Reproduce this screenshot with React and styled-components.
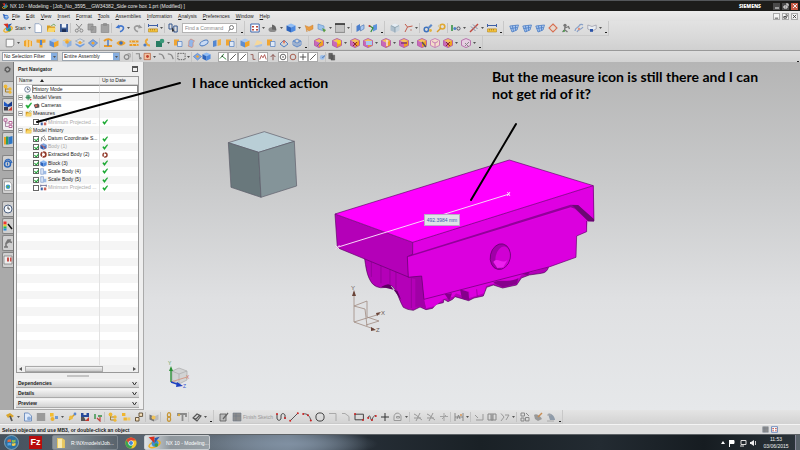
import styled, { createGlobalStyle } from 'styled-components'

const GlobalStyle = createGlobalStyle`
  * {
    box-sizing: border-box;
  }

  body {
    margin: 0;
    font-family: 'Liberation Sans', Arial, sans-serif;
    font-size: 5px;
    color: #1c1c1c;
  }

  button,
  input,
  select {
    font: inherit;
    color: inherit;
    margin: 0;
    padding: 0;
    border: 0;
    background: none;
  }
`

/* ---------- icons ---------- */

const cube = (top, left, right) => (
  <>
    <polygon points="5,.5 9.5,2.5 5,4.6 .5,2.5" fill={top} />
    <polygon points=".5,2.5 5,4.6 5,9.6 .5,7.4" fill={left} />
    <polygon points="9.5,2.5 5,4.6 5,9.6 9.5,7.4" fill={right} />
  </>
)

const magentaCube = (extra) => (
  <>
    {cube('#f7c25a', '#c968b8', '#f0a020')}
    <path d="M5 .5 9.5 2.5V7.4L5 9.6.5 7.4V2.5z" fill="none" stroke="#b65aa8" strokeWidth=".9" />
    {extra}
  </>
)

const line = (d, stroke = '#555', width = 1) => (
  <path d={d} fill="none" stroke={stroke} strokeWidth={width} />
)

const dot = (cx, cy, fill = '#c22', r = 1) => <circle cx={cx} cy={cy} r={r} fill={fill} />

const glyphs = {
  nx: (
    <>
      <ellipse cx="5" cy="6.4" rx="4.5" ry="2" transform="rotate(-25 5 6.4)" fill="none" stroke="#f0b020" strokeWidth="1.2" />
      {dot(5.4, 5.6, '#3a8fd0', 2.6)}
      {dot(6.4, 7, '#3a9a48', 1.4)}
      <path d="M.5 1 5 .4 5 5.5z" fill="#d83020" />
      <path d="M5 1.6 9 .6 5.4 5z" fill="#2a58a8" />
    </>
  ),
  app: (
    <>
      {dot(6, 6, '#4a86d8', 3.5)}
      <path d="M1 1 5 3 3 7z" fill="#2d5fb8" />
      <path d="M4 5h4M5 7h3" stroke="#d4e4f8" />
    </>
  ),
  page: <path d="M2 .7h4.2L8.5 3v6.5H2z" fill="#fdfdff" stroke="#7b93b8" strokeWidth=".7" />,
  sheet: <path d="M1.2 1.2h7.6V7L7 8.8H1.2z" fill="#f8f8f8" stroke="#777" strokeWidth=".8" />,
  folder: (
    <>
      <path d="M1 2.5h3l1 1h4V9H1z" fill="#d59b22" />
      <path d="m1 9 1.8-4.2h7L8 9z" fill="#f9d76a" />
      <path d="m5 3 3-2 1.5 2" stroke="#6b9f52" fill="none" strokeWidth=".8" />
    </>
  ),
  disk: (
    <>
      <path d="M1 1h8v8H1z" fill="#3b5b94" />
      <path d="M2.8 1h4.4v3.6H2.8z" fill="#eef3fa" />
      <path d="M3 6.2h4V9H3z" fill="#1d2f55" />
    </>
  ),
  cut: (
    <>
      {line('M2 1 6.5 6M8 1 3.8 6', '#888')}
      <circle cx="2.8" cy="7.6" r="1.5" fill="none" stroke="#888" />
      <circle cx="7.4" cy="7.6" r="1.5" fill="none" stroke="#888" />
    </>
  ),
  copy: <path d="M1 1h5v6H1zM4 3.5h5v6H4z" fill="#a2a2a2" stroke="#888" strokeWidth=".7" />,
  paste: <path d="M1.2 1.5h7.6v8H1.2zM3.5.5h3v2h-3z" fill="#a2a2a2" stroke="#888" strokeWidth=".7" />,
  undo: (
    <>
      {line('M3 4.2C6 1.5 9.5 3.5 8.2 6.2 7.6 7.6 6 8.4 5 8.8', '#3f74cc', 1.6)}
      <path d="M.5 4.8 4 1.4l.8 4.2z" fill="#3f74cc" />
    </>
  ),
  redo: (
    <>
      {line('M7 4.2C4 1.5.5 3.5 1.8 6.2 2.4 7.6 4 8.4 5 8.8', '#999', 1.6)}
      <path d="M9.5 4.8 6 1.4l-.8 4.2z" fill="#999" />
    </>
  ),
  ruler: (
    <>
      {line('M.5 2.5h9M.5 1v3M9.5 1v3', '#3d5fa6')}
      <path d="M.5 5.8h9V9h-9z" fill="#f6c33d" stroke="#a67a14" strokeWidth=".5" />
      {line('M2.5 6v1.5M4.5 6v1.5M6.5 6v1.5', '#805c0e', 0.5)}
    </>
  ),
  pick: (
    <>
      {line('M1 1h3v5H1zM5.8 3h3.4v6H5.8z', '#35578f')}
      <path d="M4 4v5l1.5-1.2L7 9z" fill="#333" />
    </>
  ),
  windowFit: (
    <>
      <path d="M.8 1h8.4v8H.8z" fill="#fff" stroke="#3f67ac" />
      <path d="M2 3h2v1.5H2zM6 3h2v1.5H6zM2 6h2v1.5H2zM6 6h2v1.5H6z" fill="#b9483c" />
    </>
  ),
  shade: (
    <>
      <ellipse cx="4.5" cy="6.5" rx="4" ry="2.6" fill="#8c8c8c" />
      <path d="M4 6.5V1.5C7 2 8.5 4 8 7z" fill="#666" />
    </>
  ),
  blueCube: cube('#8fbcf5', '#2c63bb', '#4d8ae0'),
  paleCube: (
    <>
      {cube('#e5edf4', '#aebfcc', '#c7d4de')}
      {line('M1 2.5 5 4.5 9 2.5M5 4.5v5', '#78909f', 0.7)}
    </>
  ),
  goldCube: cube('#a8c8f2', '#5f8dd0', '#f2a52a'),
  flag: <path d="M1 2.5 5 4l4-2v4L5 8 3 6.5V9L2 5z" fill="#e99c42" stroke="#c5782a" strokeWidth=".4" />,
  cursorPlane: (
    <>
      <path d="M1 1 7 3v5L1 6z" fill="#9cc3ec" stroke="#5f8fc4" strokeWidth=".6" />
      <path d="m5 5 4 2-2 2.5z" fill="#5b9b3f" />
    </>
  ),
  swatch: (
    <>
      <path d="M.2 1h9.6v8.4H.2z" fill="#c4c4c4" stroke="#777" strokeWidth=".8" />
      {line('M0 1h10', '#111', 1.2)}
    </>
  ),
  plane: (
    <>
      <path d="M1.5 3 5 1v6L1.5 9z" fill="#4c7fcc" />
      <path d="M5.5 3.5 9 1.8v4L5.5 8z" fill="#a9c9f1" stroke="#416cad" strokeWidth=".6" />
    </>
  ),
  planeRed: (
    <>
      <path d="M5 2.5 9 1v5.5L5 8.5z" fill="#5f94dc" />
      {line('M1 2.5 5 5 2.8 9', '#2f8c3b', 1.2)}
      {dot(1.5, 3, '#c33')}
    </>
  ),
  csys: (
    <>
      {line('M2 9 4.5 4 9.5 3M4.5 4 2 1', '#c25a4a')}
      {dot(8, 7, '#c9a69f', 1)}
    </>
  ),
  gearBlue: (
    <>
      <circle cx="3.4" cy="6.5" r="2.2" fill="none" stroke="#3f73bd" strokeWidth="1.5" />
      <path d="m5 4 3-3 1.5 1.5-3 3z" fill="#5d89c9" />
      {dot(7.5, 7.5, '#e1b23c', 1.4)}
    </>
  ),
  gearGold: (
    <>
      <circle cx="6.4" cy="3.6" r="2.4" fill="none" stroke="#e0a832" strokeWidth="1.6" />
      {line('M1 9 5 5', '#d99b28', 1.5)}
      {dot(3, 3, '#d9cba2', 1.2)}
    </>
  ),
  link: (
    <>
      {line('M1 2v6', '#2c8d3b', 1.5)}
      {dot(3.8, 5.5, '#4c82c8', 1.5)}
      <circle cx="7.5" cy="5.5" r="1.6" fill="none" stroke="#556" />
    </>
  ),
  measure: (
    <>
      {line('m1 9 8-8', '#c0493e', 1.4)}
      {line('M2 3.5 6.5 8M4 1.5 8.5 6', '#7f8ca5')}
    </>
  ),
  mesh: (
    <>
      <path d="M1 3 9 2 8 7 3 9z" fill="#aac7ef" />
      {line('M.8 3 9.5 2 8 7 3 9zM3.4 2.7 4.5 8.5M6.5 2.4V7.6M1.5 5.5l7-1', '#4a7cc4', 0.8)}
    </>
  ),
  rotateRed: (
    <>
      {line('M5 1 9 5 5 9 1 5z', '#d86f50', 1.1)}
      {dot(5, 5, '#e8d8cc', 2)}
    </>
  ),
  figure: (
    <>
      {dot(4, 2.3, '#777', 1.6)}
      {line('M4 3.5 3.5 7 1.5 9M4 5l3.5-1.5L8.5 6M4 7l2.5 2', '#777', 1.3)}
      {dot(3, 8, '#4b9d4b', 1)}
    </>
  ),
  swirl: (
    <>
      {line('M1 8C1 4 4 5 5 3s3-2 4-1M3 9c1-3 4-2 6-5', '#88a0c8', 1.2)}
      {dot(5, 6, '#e0907a', 1.2)}
    </>
  ),
  book: (
    <>
      <path d="M.8 2 5 3.5 9.2 2v4L5 8 .8 6z" fill="#e9edf2" stroke="#889" strokeWidth=".6" />
      <path d="M3 6h3v2.8H3z" fill="#2b53a7" />
    </>
  ),
  extrude: (
    <>
      <path d="M1 3 4 1.5 9 3v5L5 9.3 1 8z" fill="#efa52e" />
      {line('M4 1.5V9M7 2.5V9', '#fff2d0')}
    </>
  ),
  hole: (
    <>
      <path d="M.5 1.5h9v3L6.5 5v4.5h-3V5l-3-.5z" fill="#efa52e" />
      <path d="M4 2h2v5H4z" fill="#4e83cc" />
    </>
  ),
  unite: (
    <>
      {cube('#f3c76b', '#b9cbe4', '#8fb0dd')}
      {dot(5, 4, '#f0a42b', 1.8)}
    </>
  ),
  stack: (
    <>
      <path d="M5 .8 9.5 3 5 5.5.5 3z" fill="#d8dfe8" stroke="#8795aa" strokeWidth=".6" />
      <path d="m.5 5.2 4.5 2.4 4.5-2.4v1.6L5 9.5.5 6.8z" fill="#6e9ce0" />
      {dot(5, 4.5, '#f1ab3a', 1.6)}
    </>
  ),
  shell: (
    <>
      <path d="M5 1.5 9.6 5 5 9 .4 5z" fill="#7da7e6" stroke="#4a76bb" strokeWidth=".6" />
      <path d="M3 5 5 3.4 7 5 5 6.8z" fill="#f2a634" />
    </>
  ),
  sweep: (
    <>
      {line('M1 3c3-3 7-2 8 0M1 8h8', '#e99a27', 1.8)}
      {line('M5 2v6', '#4c7cc5', 1.5)}
    </>
  ),
  eye: (
    <>
      <path d="M.3 5C3 1.5 7 1.5 9.7 5 7 8.5 3 8.5.3 5z" fill="#f0a530" />
      {dot(5, 5, '#3970c0', 1.8)}
    </>
  ),
  pattern: (
    <>
      {line('M.5 3.5h9M.5 7h9', '#e99a27', 1.9)}
      {line('m2 2 2 6M6 2l2 6', '#f7cf7d')}
    </>
  ),
  bend: (
    <>
      {line('M6 1.5c-4 0-2 6 2 6', '#edaa3a', 2)}
      {dot(3, 7, '#4c7bc3', 1.6)}
    </>
  ),
  teal: (
    <>
      <path d="M1 3h6v6H1z" fill="#287c63" />
      {dot(7, 3, '#3a9979', 2.3)}
    </>
  ),
  boxes: (
    <>
      <path d="M1 1.5h5v6H1z" fill="#f0a533" />
      <path d="M4.5 3.5H9v5H4.5z" fill="#dfe8f5" stroke="#5280c4" strokeWidth=".7" />
    </>
  ),
  surface: <path d="M2 8c2-2-1-5 3-7l3.5 2c-3 2 0 5-2.5 6.5z" fill="#91b6ea" stroke="#d9795d" strokeWidth=".6" />,
  tube: <ellipse cx="5" cy="5" rx="4.4" ry="2.3" transform="rotate(-25 5 5)" fill="#c8daf4" stroke="#507fc2" strokeWidth=".9" />,
  offset: (
    <>
      <path d="M1 3 4.5 2v6L1 9z" fill="#5587d1" />
      <path d="M5.5 2 9 1v6L5.5 8z" fill="#f0b24a" />
    </>
  ),
  wedge: (
    <>
      <path d="m1 8 3-6 5 2v2z" fill="#f6d89b" />
      <path d="m1 8 8-2v2L4 9.5z" fill="#a9bfe0" />
    </>
  ),
  cage: line('M5 1 9 3v4L5 9 1 7V3zM1 3l4 2 4-2M5 5v4M3 2v6M7 2v6', '#4e7fc6', 0.8),
  loft: (
    <>
      {line('M1 6 5 2l4 4-4 3z', '#4e7fc6')}
      <path d="M3.5 3.5 5 2l1.5 1.5L5 6z" fill="#e3775a" />
    </>
  ),
  mA: magentaCube(line('m3 8 4-4', '#777')),
  mB: magentaCube(dot(7, 4, '#f8d81d', 2)),
  mC: magentaCube(line('m3 4 4 4M7 4 3 8', '#8c2d2d')),
  mD: magentaCube(<path d="M3 3h6v4H3z" fill="#a9caf0" />),
  mE: magentaCube(line('M6 2v6', '#f5e4f2', 1.4)),
  mF: magentaCube(line('M2 5h6', '#7a3770', 1.4)),
  mG: magentaCube(line('m5 4 4 5', '#555', 1.4)),
  mH: (
    <>
      <path d="M5 .5 9.5 2.5V7.4L5 9.6.5 7.4V2.5z" fill="#f4dcc9" stroke="#c47cb5" strokeWidth=".9" />
      {line('M2 3.5 5 5v4M5 5l3-1.5', '#c47cb5')}
    </>
  ),
  mI: (
    <>
      <path d="M5 .5 9.5 2.5V7.4L5 9.6.5 7.4V2.5z" fill="#e6cfe2" stroke="#b469a8" strokeWidth=".9" />
      {line('m4 5 4 4M4 8l4-4', '#888')}
    </>
  ),
  ghost: (
    <>
      <circle cx="4" cy="5.5" r="2.6" fill="none" stroke="#888" strokeWidth="1.3" />
      {line('M5 2h3v4', '#999')}
    </>
  ),
  node: (
    <>
      {line('M2 2h4v4', '#888', 1.2)}
      {dot(7, 7, '#888', 1.4)}
    </>
  ),
  nodeRed: (
    <>
      <path d="M1.2 1.5h7v7h-7z" fill="#f2c3a2" stroke="#b45a3a" strokeWidth=".8" />
      {dot(5, 5, '#c1402e', 1.6)}
    </>
  ),
  curveGray: line('M2 2c4 0 5 2 6 6', '#888', 1.5),
  dashed: <path d="M1 1.5h8v7H1z" fill="none" stroke="#555" strokeDasharray="1.6 1" />,
  snapAll: (
    <>
      {line('M1 7 4 4l5 4M4 4 6 1', '#2f8b39', 1.2)}
      {dot(4, 4, '#333')}
    </>
  ),
  lineBlack: line('m1.5 8.5 7-7', '#333'),
  curveS: line('M2 2h3v6h3', '#8b4a43'),
  zig: line('m1 8 2-5 2 3 2-4 2 6', '#a33b35'),
  arrowUp: line('M5 9V2M2 5l3-3 3 3', '#7a3a34'),
  target: (
    <>
      <circle cx="5" cy="5" r="3.5" fill="none" stroke="#444" />
      {dot(5, 5, '#444')}
    </>
  ),
  ring: <circle cx="5" cy="5" r="3.5" fill="none" stroke="#a2503f" strokeWidth="1.1" />,
  plus: line('M5 1v8M1 5h8', '#333'),
  sphereCube: (
    <>
      {dot(4, 5.5, '#9cbfea', 3)}
      {line('m4 6 5-4', '#5a82bb', 1.3)}
    </>
  ),
  darkPages: <path d="M2 1.5h4v6H2zM4.5 3.5h4V9h-4z" fill="#666" stroke="#444" strokeWidth=".5" />,
  wrench: (
    <>
      <path d="M1 3 5 1l4 3-2 1.5-2-1-2 1.5z" fill="#d9a52d" />
      {line('m5 4 2 5', '#555', 1.8)}
    </>
  ),
  pageBlue: (
    <>
      <path d="M1.5 1h4L8.5 4v5h-7z" fill="#dfeafa" stroke="#5a7fb5" strokeWidth=".8" />
      {dot(6, 6.5, '#8bacd9', 2)}
    </>
  ),
  grayBox: <path d="M.8 1h8.4v8H.8z" fill="#9a9a9a" />,
  assembly: (
    <>
      <path d="M1 1h3.6v3.6H1z" fill="#f3bd31" />
      {dot(3.5, 7, '#eeb22c', 2)}
      <path d="M6 4h3v3H6z" fill="#6e9ad7" />
    </>
  ),
  move: (
    <>
      {line('m2 8 6-6', '#d79e25', 1.5)}
      {dot(4, 5.5, '#eebd3f', 2)}
      {dot(8, 2, '#5887cf', 1.4)}
    </>
  ),
  mate: (
    <>
      <path d="M1 1h2.5v2h3V1H9v4H1z" fill="#274a9b" />
      <path d="M1 5h3l2 4H1z" fill="#555" />
      <path d="m9 5-4 4h4z" fill="#c9372c" />
    </>
  ),
  joints: (
    <>
      {line('M2 2v5M5 4h4', '#328f43', 1.4)}
      {line('m4 6 3 3V5', '#c4423b', 1.2)}
    </>
  ),
  parts: (
    <>
      {line('M2.5 2v6h4M2.5 5h4', '#a58031')}
      {dot(2.5, 2.5, '#efb834', 1.9)}
      {dot(7, 5, '#efb834', 1.7)}
      {dot(7, 8.2, '#efb834', 1.5)}
    </>
  ),
  partsTwo: (
    <>
      <path d="M1 1h3.4v3H1zM2.5 5.5h3.4v3H2.5z" fill="#efb52e" />
      <path d="M6.3 5.5h3v3h-3z" fill="#f3cb68" />
    </>
  ),
  squares: <path d="M5 1h3.6v3.4H5zM1.5 5.5H5V9H1.5z" fill="#f6e0bb" stroke="#5b4a31" strokeWidth=".9" />,
  camera: (
    <>
      {cube('#ddd', '#777', '#bbb')}
      {dot(4.5, 5.5, '#f0c35a', 2)}
    </>
  ),
  chain: (
    <>
      <ellipse cx="5" cy="3" rx="1.6" ry="2.3" fill="none" stroke="#c69637" strokeWidth="1.2" />
      <ellipse cx="5" cy="7" rx="1.6" ry="2.3" fill="none" stroke="#c69637" strokeWidth="1.2" />
    </>
  ),
  tee: (
    <>
      {line('M1 4V2h8v3M5.5 2.5V9', '#8a8a8a', 1.8)}
      {dot(2, 3, '#d8aa45', 1.2)}
    </>
  ),
  clip: line('m1 6 4-4 4 2-4 5zM1 6l3 1 4-4', '#555', 1.1),
  sketch: (
    <>
      <path d="M1 2h6v7H1z" fill="#bbb" stroke="#555" strokeWidth=".8" />
      {line('m4 7 5-6', '#666', 1.3)}
    </>
  ),
  finish: <path d="M1 1h8v8H1zM1 4h8M4 1v8" fill="#8d8d8d" stroke="#6f7a88" strokeWidth=".6" />,
  profile: (
    <>
      {line('M1 2v4c0 3 4 3 4 0V4c0-3 3-3 4-1v4', '#444')}
      {dot(1, 2)}
      {dot(9, 6)}
    </>
  ),
  lineRed: (
    <>
      {line('M1 9 9 1', '#555')}
      {dot(1.2, 8.8)}
      {dot(8.8, 1.2)}
    </>
  ),
  arcRed: (
    <>
      {line('M1 2c4-1 7 2 8 7', '#555')}
      {dot(1.2, 2)}
      {dot(6, 3.3)}
      {dot(8.8, 8.6)}
    </>
  ),
  circle: <circle cx="5" cy="5" r="4.1" fill="none" stroke="#444" />,
  corner: line('M1 1.5h7V9', '#aaa'),
  chamfer: line('M1 1.5h3l4 3V9', '#aaa'),
  rect: (
    <>
      {line('M1 2.2h8.4v5.6H1z', '#444')}
      {dot(1, 2)}
      {dot(9, 8)}
    </>
  ),
  spline: (
    <>
      {line('M1 6c2-7 3 5 4 2s2-5 4-4', '#555')}
      {dot(1.2, 6)}
      {dot(5, 8)}
      {dot(8.8, 4)}
    </>
  ),
  ellipseGray: <path d="M1 8.5V5c0-5 6-5 7-1v4.5zM3.5 6V4.5h3V6z" fill="#ddd" stroke="#999" />,
  trim: line('M1 2c3 1 5 4 8 6M3 9l4-8M1 6h7', '#999'),
  cross: line('M5 1v8M1 4.5h8M3 7l4-4', '#a5a5a5'),
  dims: (
    <>
      {line('M1 1v8M9 1v8M3 7l1.5-4L6 7M1 5h8', '#888')}
      {dot(7, 3, '#d79555')}
    </>
  ),
  perp: line('m1 3 3 3M9 2v6H2', '#999'),
  mirror: line('M1 2v6h8V2H6v6M4 8V2H1M5 1v8', '#888'),
  auto: line('M1 1.5 4 5 1 9M5 3h4L6 8', '#999'),
  gridTool: line('M1 1h3.5v3H1zM5.5 5.5H9v3.4H5.5zM1 6h3v3H1zM6 1l3 3', '#888'),
  clay: (
    <>
      <path d="M1 3c3-2 6 1 8 4L5 9 2 7z" fill="#999" />
      {line('m5 5 4-4', '#c78c52', 1.5)}
    </>
  ),
  clay2: (
    <>
      <path d="M2 2c3-2 7 3 7 6H4z" fill="#8f9ba9" />
      {line('M1 3h4M1 9h7', '#aaa')}
    </>
  ),
  gear: (
    <>
      <circle cx="5" cy="5" r="3" fill="none" stroke="#3c3c3c" strokeWidth="1.3" />
      <circle cx="5" cy="5" r="4.2" fill="none" stroke="#3c3c3c" strokeDasharray="1.2 1.4" />
    </>
  ),
  constraint: (
    <>
      <path d="M1 .5 5 3.5V6L1 5z" fill="#1e57c4" />
      <path d="M9 .5 5 3.5V6l4-1z" fill="#163a8c" />
      <path d="M1 6h4v3.5H1z" fill="#3a3a48" />
      <path d="m9 5.5-4 4h4z" fill="#c9372c" />
    </>
  ),
  navigator: (
    <>
      {line('M2.5 2v6.5h3M2.5 5h3', '#9b6d94', 0.8)}
      <path d="M1 .8h3v2.4H1z" fill="#fff" stroke="#b0558f" strokeWidth=".9" />
      <path d="M6 3.5h3V6H6zM6 7.3h3v2.2H6z" fill="#fff" stroke="#b0558f" strokeWidth=".9" />
    </>
  ),
  books: (
    <>
      <path d="M1 2h2v7.5H1z" fill="#e9a223" />
      <path d="M3 1.5h2.5v8H3z" fill="#2c9a60" />
      <path d="M5.5 2 9.5 1v7.5l-4 1z" fill="#2d76c7" />
    </>
  ),
  globe: (
    <>
      <circle cx="4.5" cy="6" r="3" fill="none" stroke="#2c67ba" strokeWidth="1.5" />
      {line('M2 3c2-3 6-2 7 2M4.5 4.5v3', '#2c67ba', 1.2)}
    </>
  ),
  web: (
    <>
      <path d="M1.5.8h5L8.8 3v6.4H1.5z" fill="#fff" stroke="#777" strokeWidth=".6" />
      {dot(5, 5.8, '#3f9bd0', 2.3)}
      {dot(5, 5.8, '#5cb050', 1.1)}
    </>
  ),
  clock: (
    <>
      <circle cx="5" cy="5" r="4" fill="#f4f8fd" stroke="#4d6180" />
      {line('M5 2.5V5h2', '#444')}
    </>
  ),
  palette: (
    <>
      <path d="M.5.5h3v3h-3z" fill="#e33" />
      <path d="M.5 3.5h3v2h-3z" fill="#ec2" />
      <path d="M.5 5.5h3v2h-3z" fill="#2b5" />
      <path d="M.5 7.5h3v2h-3z" fill="#28d" />
      {line('m5 3 4 5', '#111', 1.5)}
    </>
  ),
  robot: line('M1 9h4M3 9V5.5l3-2 3 1M3 5.5 5 2h3', '#777', 1.6),
  roles: (
    <>
      <path d="M1 1h8v8H1z" fill="#eee" stroke="#777" strokeWidth=".7" />
      <path d="M4 2.5h2v4H4zM7 2.5h1.5v4H7z" fill="#c8504a" />
    </>
  ),
  views: (
    <>
      {dot(4.5, 4.5, '#70b08b', 3.4)}
      {line('M4.5 1v8M1 5h8', '#2a7a4a', 0.9)}
      {dot(8, 8, '#c44', 1.2)}
    </>
  ),
  cam: (
    <>
      <path d="M1 4 7 2l2 2v4L3 9z" fill="#555" />
      {dot(4.5, 5.5, '#d76a5a', 1.8)}
    </>
  ),
  measureNode: (
    <>
      {line('M1 2h8M1 1v3M9 1v3', '#447')}
      <path d="M1 5h3v4H1z" fill="#3f64a8" />
      <path d="M5.5 5H9v4H5.5z" fill="#c8645b" />
    </>
  ),
  datum: line('M2 9V4l5 4M2 4l5-3M6 3l3 5', '#666'),
  body: (
    <>
      {cube('#7ba2dd', '#2e59a8', '#4776c4')}
      {line('M2 3 8 8', '#d65345', 1.4)}
    </>
  ),
  extracted: <circle cx="5" cy="5" r="3.4" fill="none" stroke="#933b2c" strokeWidth="2.4" strokeDasharray="6 1" />,
  scale: (
    <>
      <path d="M1 1h4v8H1z" fill="#d6e2f4" stroke="#5b82c0" strokeWidth=".7" />
      <path d="M5 4h4v5H5z" fill="#9ebbe5" />
    </>
  ),
  tick: <path d="m1 5 2-.8L4.2 6 8.5 1 9.6 1.8 4.5 9h-.9z" fill="#18a830" stroke="#18a830" strokeWidth=".6" />,
}

const Svg = styled.svg`
  display: block;
  flex: none;
  width: ${(p) => p.$size || 10}px;
  height: ${(p) => p.$size || 10}px;
`

const Icon = ({ name, size }) => (
  <Svg viewBox="0 0 10 10" $size={size} aria-hidden="true">
    {glyphs[name]}
  </Svg>
)

/* ---------- window frame ---------- */

const Window = styled.div`
  min-height: 100vh;
  display: flex;
  flex-direction: column;
  background: #dcdcdc;
  overflow: hidden;
`

const TitleBar = styled.header`
  height: 11px;
  display: flex;
  align-items: center;
  gap: 2px;
  padding-left: 2px;
  background: #1d1d1b;
  border-top: 1px solid #54575a;
  color: #e6e6e6;
`

const Title = styled.h1`
  margin: 0;
  flex: 1;
  font-size: 5px;
  font-weight: 400;
  white-space: nowrap;
`

const Brand = styled.span`
  margin-right: 10px;
  font-family: 'Open Sans', sans-serif;
  font-weight: 800;
  color: #fff;
`

const WindowButtons = styled.div`
  display: flex;
  gap: 2px;
  padding-right: 2px;
`

const WindowButton = styled.button`
  width: 7px;
  height: 7px;
  display: flex;
  align-items: center;
  justify-content: center;
  color: ${(p) => (p.$light ? '#333' : '#eee')};
  background: ${(p) => (p.$close ? '#c85a45' : p.$light ? '#f4f4f4' : '#4a4a4a')};
  box-shadow: ${(p) => (p.$light ? 'inset 0 0 0 1px #aaa' : 'none')};
`

const MenuBar = styled.nav`
  height: 10px;
  display: flex;
  align-items: center;
  padding-left: 2px;
  background: linear-gradient(#ececec, #e0e0e0);
`

const MenuList = styled.div`
  display: flex;
  flex: 1;
`

const MenuItem = styled.button`
  padding: 0 3px;
  line-height: 9px;
  white-space: nowrap;

  &::first-letter {
    text-decoration: underline;
  }
`

const Bar = styled.div`
  height: ${(p) => p.$height}px;
  display: flex;
  align-items: center;
  background: ${(p) => p.$fill};
  border-top: ${(p) => (p.$rule ? '1px solid #999' : 'none')};
`

const Toolbar = styled.div`
  height: 100%;
  display: flex;
  align-items: center;
  padding-left: 3px;
  border-right: 1px solid #c8c8c8;
  border-bottom: 1px solid #cacaca;
`

const ToolButton = styled.button`
  width: 13px;
  height: 12px;
  display: flex;
  align-items: center;
  justify-content: center;
`

const DropButton = styled.button`
  width: 5px;
  height: 10px;
  display: flex;
  align-items: center;
  justify-content: center;
`

const Separator = styled.span`
  width: 2px;
  height: 10px;
  border-left: 1px solid #c4c4c4;
`

const Overflow = styled.span`
  width: 5px;
  height: 10px;
  display: flex;
  align-items: flex-end;
  justify-content: center;

  &::after {
    content: '';
    width: 2px;
    height: 1px;
    background: #222;
  }
`

const StartButton = styled.button`
  display: flex;
  align-items: center;
  gap: 2px;
  width: 28px;
`

const FindBox = styled.label`
  width: 55px;
  height: 10px;
  margin: 0 2px 0 3px;
  display: flex;
  align-items: center;
  padding: 0 2px;
  background: #fff;
  border: 1px solid #b4b4b4;

  input {
    min-width: 0;
    flex: 1;
    outline: 0;
  }

  input::placeholder {
    color: #888;
  }
`

const Label = styled.span`
  width: 31px;
  color: #999;
  white-space: nowrap;
`

const Caret = () => (
  <svg width="3" height="2" viewBox="0 0 3 2" aria-hidden="true">
    <path d="M0 0h3L1.5 2z" fill="#555" />
  </svg>
)

const Tools = ({ items }) =>
  items.split(' ').map((item, i) => {
    if (item === '|') return <Separator key={i} />
    if (item === '.') return <Overflow key={i} />
    if (item === 'v')
      return (
        <DropButton key={i} aria-label="More">
          <Caret />
        </DropButton>
      )
    return (
      <ToolButton key={i} aria-label={item}>
        <Icon name={item} />
      </ToolButton>
    )
  })

const SelectWrap = styled.div`
  position: relative;
  width: ${(p) => p.$width}px;
  height: 9px;
  background: #fff;
  border: 1px solid #9aa3ad;

  select {
    display: block;
    appearance: none;
    width: 100%;
    height: 100%;
    padding-left: 1px;
    line-height: 7px;
  }
`

const SelectArrow = styled.span`
  position: absolute;
  top: 0;
  right: 0;
  bottom: 0;
  width: 6px;
  display: flex;
  align-items: center;
  justify-content: center;
  background: #86aee0;
  pointer-events: none;
`

const Picker = ({ label, value, width }) => (
  <SelectWrap $width={width}>
    <select aria-label={label} defaultValue={value}>
      <option>{value}</option>
    </select>
    <SelectArrow>
      <Caret />
    </SelectArrow>
  </SelectWrap>
)

const Pickers = styled.div`
  display: flex;
  gap: 4px;
  padding-left: 2px;
`

const FilterTools = styled.div`
  display: flex;
  flex: 1;
  align-items: center;
  padding-left: 3px;
`

const SnapTools = styled.div`
  width: 105px;
  margin: 0 2px 0 7px;
  display: grid;
  grid-template-columns: repeat(11, 1fr);
`

const SnapButton = styled.button`
  height: 10px;
  display: flex;
  align-items: center;
  justify-content: center;
  background: ${(p) => (p.$on ? '#fff' : 'transparent')};
  border: 1px solid ${(p) => (p.$on ? '#aaa' : 'transparent')};
`

const snaps = [
  ['snapAll', true],
  ['lineBlack', true],
  ['lineBlack', true],
  ['curveS', false],
  ['zig', true],
  ['arrowUp', false],
  ['target', true],
  ['ring', false],
  ['plus', true],
  ['lineBlack', true],
  ['sphereCube', false],
]

/* ---------- work area ---------- */

const Work = styled.main`
  position: relative;
  flex: 1;
  display: flex;
`

const ResourceBar = styled.aside`
  width: 13px;
  padding: 2px 0 0 2px;
  display: flex;
  flex-direction: column;
  gap: 7px;
  background: #aaa;
`

const ResourceGroup = styled.div`
  display: flex;
  flex-direction: column;
  gap: 1px;
`

const ResourceTab = styled.button`
  height: ${(p) => (p.$plain ? 10 : 16)}px;
  display: flex;
  align-items: center;
  justify-content: center;
  border: ${(p) => (p.$plain ? 0 : 1)}px solid #858585;
  border-right: 0;
  border-radius: 2px 0 0 2px;
  background: ${(p) => (p.$plain ? 'none' : p.$active ? '#f0f0f0' : '#d0d0d0')};
`

const resourceGroups = [
  ['gear'],
  ['parts', 'constraint', 'navigator', 'books'],
  ['globe'],
  ['web'],
  ['clock', 'palette', 'robot', 'roles'],
]

const Navigator = styled.section`
  width: 131px;
  padding: 0 4px 1px 2px;
  display: flex;
  flex-direction: column;
  background: #efefef;
  border-left: 1px solid #777;
  border-right: 1px solid #aaa;
  border-bottom: 1px solid #aaa;
`

const PanelHead = styled.div`
  height: 14px;
  display: flex;
  align-items: center;
  justify-content: space-between;
  padding: 0 1px 0 2px;

  h2 {
    margin: 0;
    font-size: 5px;
    font-weight: 700;
  }
`

const DockButton = styled.button`
  width: 6px;
  height: 6px;
  border: 1px solid #555;
  border-top-width: 2px;
`

const TreeFrame = styled.div`
  flex: 1;
  display: flex;
  flex-direction: column;
  border: 1px solid #999;
  background: #fff;
`

const Tree = styled.table`
  flex: 1;
  display: flex;
  flex-direction: column;

  thead {
    flex: none;
    height: 8px;
    display: grid;
    background: #f0f0f0;
    border-bottom: 1px solid #ccc;
  }

  tbody {
    flex: 1;
    display: grid;
    grid-auto-rows: 1fr;
  }

  tr {
    display: grid;
    grid-template-columns: 1fr 39px;
    min-height: 0;
  }

  tbody tr:nth-child(even) {
    background: #f5f5f5;
  }

  th,
  td {
    padding: 0;
    display: flex;
    align-items: center;
    min-width: 0;
    font-weight: 400;
    line-height: 7px;
    white-space: nowrap;
  }

  th:last-child,
  td:last-child {
    padding-left: 2px;
    border-left: 1px solid #e2e2e2;
  }
`

const HeadCell = styled.th`
  gap: 8px;

  &:first-child {
    padding-left: 2px;
  }
`

const NodeCell = styled.td`
  padding-left: ${(p) => p.$indent}px !important;
  gap: 1px;
  color: ${(p) => (p.$dim ? '#aaa' : '#222')};

  label {
    flex: 1;
  }
`

const FocusLabel = styled.label`
  align-self: stretch;
  border: 1px solid #888;
  border-right: 0;
  line-height: 6px;
`

const FocusCell = styled.td`
  border: 1px solid #888;
`

const Toggle = styled.button`
  flex: none;
  width: 5px;
  height: 5px;
  margin-right: 1px;
  display: flex;
  align-items: center;
  justify-content: center;
  border: 1px solid #bbb;
  background: #fff;

  &::after {
    content: '';
    width: 3px;
    height: 1px;
    background: #777;
  }
`

const Tick = styled.input`
  appearance: none;
  position: relative;
  flex: none;
  width: 6px;
  height: 6px;
  border: 1px solid #666 !important;
  background: #fff !important;

  &:checked::after {
    content: '';
    position: absolute;
    left: 1px;
    top: 0;
    width: 2px;
    height: 3px;
    border: solid #18a030;
    border-width: 0 1px 1px 0;
    transform: rotate(40deg);
  }
`

const nodes = [
  { icon: 'clock', label: 'History Mode', focus: true },
  { icon: 'views', label: 'Model Views', toggle: true },
  { icon: 'cam', label: 'Cameras', toggle: true, ticked: true },
  { icon: 'folder', label: 'Measures', toggle: true },
  { icon: 'measureNode', label: 'Minimum Projected ...', check: false, dim: true, status: 'tick' },
  { icon: 'folder', label: 'Model History', toggle: true },
  { icon: 'datum', label: 'Datum Coordinate S...', check: true, status: 'tick' },
  { icon: 'body', label: 'Body (1)', check: true, dim: true, status: 'tick' },
  { icon: 'extracted', label: 'Extracted Body (2)', check: true, status: 'extracted' },
  { icon: 'blueCube', label: 'Block (3)', check: true, status: 'tick' },
  { icon: 'scale', label: 'Scale Body (4)', check: true, status: 'tick' },
  { icon: 'scale', label: 'Scale Body (5)', check: true, status: 'tick' },
  { icon: 'measureNode', label: 'Minimum Projected ...', check: false, dim: true, status: 'tick' },
]

const emptyRows = Array.from({ length: 21 })

const TreeRow = ({ node, id }) => {
  const isFeature = node.check !== undefined
  const NodeLabel = node.focus ? FocusLabel : 'label'
  const StatusCell = node.focus ? FocusCell : 'td'
  return (
    <tr>
      <NodeCell $indent={isFeature ? 16 : node.toggle ? 1 : 7} $dim={node.dim}>
        {node.toggle && <Toggle aria-label={`Toggle ${node.label}`} />}
        {isFeature && <Tick type="checkbox" id={id} defaultChecked={node.check} />}
        {node.ticked && <Icon name="tick" size={7} />}
        <Icon name={node.icon} size={7} />
        <NodeLabel htmlFor={isFeature ? id : undefined}>{node.label}</NodeLabel>
      </NodeCell>
      <StatusCell>{node.status && <Icon name={node.status} size={6} />}</StatusCell>
    </tr>
  )
}

const ScrollTrack = styled.div`
  height: 7px;
  display: flex;
  align-items: center;
  justify-content: space-between;
  padding: 0 2px;
  background: #efefef;
`

const ScrollThumb = styled.div`
  width: 78px;
  height: 6px;
  margin-right: 28px;
  border: 1px solid #aaa;
  background: linear-gradient(#f2f2f2, #c9c9c9);
`

const Grip = styled.div`
  width: 22px;
  height: 2px;
  margin: 2px auto;
  background: #c4c4c4;
`

const Sections = styled.div`
  display: flex;
  flex-direction: column;
  gap: 1px;
`

const SectionButton = styled.button`
  height: 9px;
  display: flex;
  align-items: center;
  justify-content: space-between;
  padding: 0 2px;
  font-weight: 700;
  background: linear-gradient(#f6f6f6, #d2d2d2);
  border-bottom: 1px solid #aaa;
`

const Viewport = styled.section`
  flex: 1;
  background: linear-gradient(#b5b5b5, #c9cacb 35%, #dfe0e2 68%, #e6e8ea);
`

const Drawing = styled.svg`
  position: absolute;
  left: 0;
  top: 0;
  width: 800px;
  height: 347px;
  pointer-events: none;
`

const Note = styled.p`
  position: absolute;
  left: ${(p) => p.$left}px;
  top: ${(p) => p.$top}px;
  margin: 0;
  font-family: Lato, 'Open Sans', sans-serif;
  font-size: 14px;
  font-weight: 700;
  line-height: 17px;
  color: #000;
  white-space: nowrap;
`

const Dimension = styled.output`
  position: absolute;
  left: 424px;
  top: 152px;
  width: 36px;
  height: 12px;
  border: 1px solid #b9a9c6;
  background: #dfe2e8;
  line-height: 10px;
  text-align: center;
  white-space: nowrap;
  color: #3c5cae;
`

const Scene = () => (
  <Drawing viewBox="0 0 800 347" aria-hidden="true">
    <g transform="translate(160 8) scale(.3333)" stroke="#5c5a68" strokeWidth="2" strokeLinejoin="round">
      <polygon points="205,218 313,185 403,214 296,247" fill="#b9ced6" />
      <polygon points="205,218 296,247 303,382 213,352" fill="#69787c" />
      <polygon points="296,247 403,214 410,348 303,382" fill="#849499" />
    </g>
    <g transform="translate(320 88) scale(.3333)" strokeLinejoin="round">
      <path
        d="M133 320C138 352 140 380 158 402Q178 422 214 407C232 420 236 448 250 472Q262 480 280 481L300 471L318 479L338 475L348 463L370 458L372 448L384 455L398 448L405 440L446 452L462 444L490 438L500 412L520 405L548 414L590 405L604 384L628 375L664 370Q682 368 686 350L700 300L300 300z"
        fill="#b400b8"
        stroke="#50005a"
        strokeWidth="2"
      />
      <path d="M312 448 318 475 345 468 370 447 400 440 408 430 446 445 492 430 498 408 540 395 560 404 592 394 605 374 650 362 684 352 660 330 340 400z" fill="#dc00df" />
      <path d="M520 398C540 386 566 400 596 384L590 402 548 412zM420 418 444 425 448 450 426 446zM606 372 630 364 624 376zM374 432 396 430 388 452z" fill="#86008c" />
      <path d="M154 335v46M183 345v55M210 355v50M228 362v58M274 384v90M290 384v84M446 425v25M470 418l2 22" stroke="#8a0090" strokeWidth="2" fill="none" />
      <path d="M184 410Q210 395 214 410L244 450 232 422z" fill="#5c0062" />
      <polygon points="278,277 820,107 822,213 802,214 800,245 770,258 768,322 690,350 312,448 305,378 265,382 262,320 278,313" fill="#db00de" />
      <path d="M820 107 822 213 805 212 770 176 752 176 278 318V277z" fill="#df00e2" />
      <path d="M278 313 752 164 774 165 822 208 822 214 804 213 765 176 752 172 262 322z" fill="#92009a" />
      <path d="M756 165 774 165 822 208 822 214 804 213z" fill="#6c0873" />
      <polygon points="45,192 278,277 278,313 262,320 265,381 52,293" fill="#b400b8" />
      <path d="M264 381 305 378 312 448 318 475 304 470 286 470 286 388z" fill="#a000a6" />
      <polygon points="45,192 568,30 820,107 278,277" fill="#ff00ff" />
      <path d="M45 192 568 30 820 107 822 213 804 213M800 213V245L770 258 768 322 690 350 312 448 305 378 265 382 262 320 278 313V277L820 107M278 277 45 192 52 293 265 381" fill="none" stroke="#60006a" strokeWidth="2" />
      <ellipse cx="541" cy="320" rx="30" ry="39" transform="rotate(12 541 320)" fill="#a000a8" stroke="#5a0064" strokeWidth="2" />
      <ellipse cx="548" cy="322" rx="21" ry="33" transform="rotate(12 548 322)" fill="#d000d4" />
      <path d="M520 336C532 320 546 344 562 330L550 352 532 354z" fill="#ec20ee" />
      <path d="M52 292 568 132M562 126l8 12M570 126l-8 12M46 286l12 12M58 286l-12 12" stroke="#f8d8f8" strokeWidth="3" />
    </g>
    <g fill="none" stroke="#a08a80" strokeWidth=".8">
      <path d="M354 260V230M354 260 380 252M354 260 374 267M354 244 367 239V255M354 244 365 247 367 264M367 255 379 259 366 263" />
      <path d="m352 234 2-6 2 6zM376 251l5-1-4 4zM371 265l5 3-5 1z" fill="#6a4438" stroke="none" />
    </g>
    <g fontSize="6" fill="#6a5a54">
      <text x="351" y="228">Y</text>
      <text x="381" y="253">X</text>
      <text x="376" y="270">Z</text>
    </g>
    <path d="m172 309 7-3 8 3v9l-8 4-7-4z" fill="#d2d3d4" stroke="#aaa" strokeWidth=".7" />
    <path d="m172 309 7 3 8-3M179 312v10" fill="none" stroke="#aaa" strokeWidth=".7" />
    <path d="m171 320 16-5" stroke="#d49a88" />
    <path d="M171 320v-12" stroke="#2a9035" strokeWidth="1.4" />
    <path d="m169 309 2-5 2 5z" fill="#2a9035" />
    <path d="m171 320 9 3" stroke="#1c40c0" strokeWidth="1.4" />
    <path d="m177 320 6 4-7 1z" fill="#1c40c0" />
    <g fontSize="5">
      <text x="168" y="303" fill="#5aa060">Y</text>
      <text x="186" y="317" fill="#d07a6a">X</text>
      <text x="183" y="326" fill="#3b5ad0">Z</text>
    </g>
    <path d="M37 60 180 21M471 138 516 62" stroke="#000" strokeWidth="2" strokeLinecap="round" />
  </Drawing>
)

/* ---------- bottom ---------- */

const StatusBar = styled.div`
  height: 10px;
  display: flex;
  align-items: center;
  gap: 2px;
  padding: 0 22px 0 2px;
  font-weight: 700;
  background: #dedede;
  border-top: 1px solid #f4f4f4;
`

const StatusText = styled.span`
  flex: 1;
`

const TaskBar = styled.footer`
  height: 16px;
  display: flex;
  align-items: center;
  padding-left: 4px;
  border-top: 1px solid #5d6266;
  color: #f0f0f0;
  background:
    radial-gradient(ellipse 90px 14px at 36% 60%, #8090a2, transparent),
    linear-gradient(90deg, #46525e, #626e7a 28%, #728190 36%, #252d35 46%, #1a2126 60%, #232b32 75%, #161c21 88%, #2b343a);
`

const TaskIcon = styled.button`
  width: ${(p) => p.$width}px;
  display: flex;
  align-items: center;
  justify-content: center;
`

const FzBadge = styled.span`
  width: 13px;
  height: 13px;
  background: #b80d0d;
  color: #fff;
  font-size: 9px;
  font-weight: 700;
  line-height: 13px;
  text-align: center;
`

const TaskButton = styled.button`
  width: 66px;
  height: 15px;
  display: flex;
  align-items: center;
  gap: 5px;
  padding: 0 3px;
  border: 1px solid ${(p) => (p.$active ? '#c8ccd0' : '#7b848c')};
  border-radius: 2px;
  background: ${(p) => (p.$active ? 'linear-gradient(90deg, #dfe3e5, #8f979d 40%, #98a0a6)' : 'linear-gradient(90deg, #8e979d, #59636c)')};
  white-space: nowrap;
  color: #fff;
`

const Tray = styled.div`
  flex: 1;
  display: flex;
  align-items: center;
  justify-content: flex-end;
  gap: 3px;
`

const Clock = styled.time`
  width: 32px;
  line-height: 7px;
  text-align: center;
`

const ShowDesktop = styled.button`
  width: 5px;
  height: 15px;
  background: #59636a;
  border-left: 1px solid #889;
`

const menus = ['File', 'Edit', 'View', 'Insert', 'Format', 'Tools', 'Assemblies', 'Information', 'Analysis', 'Preferences', 'Window', 'Help']

const windowShapes = [
  ['Minimize', 'M1 5h4'],
  ['Restore', 'M1 3h3v2H1zM3 1h2v2'],
  ['Close', 'M1 1l4 4M5 1 1 5'],
]

const Controls = ({ light }) => (
  <WindowButtons>
    {windowShapes.map(([name, d]) => (
      <WindowButton key={name} $light={light} $close={!light && name === 'Close'} aria-label={name}>
        <svg width={light ? 5 : 6} height={light ? 5 : 6} viewBox="0 0 6 6">
          <path d={d} fill="none" stroke="currentColor" />
        </svg>
      </WindowButton>
    ))}
  </WindowButtons>
)

const App = () => {
  return (
    <Window>
      <GlobalStyle />
      <TitleBar>
        <Icon name="nx" size={6} />
        <Title>NX 10 - Modeling - [Job_No_3595__GW34382_Side core box 1.prt (Modified) ]</Title>
        <Brand>SIEMENS</Brand>
        <Controls />
      </TitleBar>
      <MenuBar>
        <Icon name="app" size={7} />
        <MenuList>
          {menus.map((name) => (
            <MenuItem key={name}>{name}</MenuItem>
          ))}
        </MenuList>
        <Controls light />
      </MenuBar>

      <Bar $height={15} $fill="linear-gradient(#e2e2e2, #dadada)">
        <Toolbar>
          <StartButton>
            <Icon name="nx" />
            Start
            <Caret />
          </StartButton>
          <Tools items="page folder disk | cut copy paste | undo v redo | ruler v | pick" />
          <FindBox>
            <input aria-label="Find a Command" placeholder="Find a Command" />
            <svg width="6" height="7" viewBox="0 0 6 7" aria-hidden="true">
              <circle cx="3.5" cy="2.5" r="2" fill="none" stroke="#777" />
              <path d="M2 4 .5 6.5" stroke="#777" />
            </svg>
          </FindBox>
          <Overflow />
        </Toolbar>
        <Toolbar>
          <Tools items="windowFit v shade v blueCube v flag cursorPlane v swatch v | plane planeRed ." />
        </Toolbar>
        <Toolbar>
          <Tools items="paleCube csys v | gearBlue gearGold | link v measure v ruler ." />
        </Toolbar>
        <Toolbar>
          <Tools items="mesh mesh mesh rotateRed figure swirl book v ." />
        </Toolbar>
      </Bar>
      <Bar $height={14} $fill="linear-gradient(#dadada, #d0d0d0)">
        <Toolbar>
          <Tools items="sheet v extrude hole goldCube unite stack shell | sweep eye pattern bend teal v boxes surface tube offset boxes | goldCube wedge boxes loft cage ." />
        </Toolbar>
        <Toolbar>
          <Tools items="mA v mB v mC mD v mE v mF v mG mH mC v mI v ." />
        </Toolbar>
      </Bar>
      <Bar $height={12} $fill="linear-gradient(#dedede, #d2d2d2)" $rule>
        <Pickers>
          <Picker label="Selection filter" value="No Selection Filter" width={56} />
          <Picker label="Selection scope" value="Entire Assembly" width={58} />
        </Pickers>
        <FilterTools>
          <Icon name="ghost" size={9} />
          <Separator />
          <Icon name="node" size={9} />
          <Icon name="nodeRed" size={9} />
          <DropButton aria-label="More"><Caret /></DropButton>
          <Icon name="curveGray" size={9} />
          <Icon name="curveGray" size={9} />
          <Separator />
          <Icon name="dashed" size={9} />
          <DropButton aria-label="More"><Caret /></DropButton>
          <Separator />
          <Icon name="shell" size={9} />
          <Icon name="blueCube" size={9} />
          <SnapTools>
            {snaps.map(([name, on], i) => (
              <SnapButton key={i} $on={on} aria-label={name}>
                <Icon name={name} size={8} />
              </SnapButton>
            ))}
          </SnapTools>
          <Separator />
          <Icon name="darkPages" size={9} />
        </FilterTools>
        <Overflow />
      </Bar>

      <Work>
        <ResourceBar>
          {resourceGroups.map((group) => (
            <ResourceGroup key={group[0]}>
              {group.map((name) => (
                <ResourceTab key={name} $plain={name === 'gear'} $active={name === 'navigator'} aria-label={name}>
                  <Icon name={name} size={name === 'gear' ? 7 : 10} />
                </ResourceTab>
              ))}
            </ResourceGroup>
          ))}
        </ResourceBar>
        <Navigator>
          <PanelHead>
            <h2>Part Navigator</h2>
            <DockButton aria-label="Float panel" />
          </PanelHead>
          <TreeFrame>
            <Tree>
              <thead>
                <tr>
                  <HeadCell>
                    Name
                    <svg width="4" height="3"><path d="M0 3h4L2 0z" fill="#222" /></svg>
                  </HeadCell>
                  <HeadCell>Up to Date</HeadCell>
                </tr>
              </thead>
              <tbody>
                {nodes.map((node, i) => (
                  <TreeRow key={i} id={`node-${i}`} node={node} />
                ))}
                {emptyRows.map((_, i) => (
                  <tr key={i}>
                    <td />
                    <td />
                  </tr>
                ))}
              </tbody>
            </Tree>
            <ScrollTrack>
              <svg width="3" height="4"><path d="M3 0v4L0 2z" fill="#555" /></svg>
              <ScrollThumb />
              <svg width="3" height="4"><path d="M0 0v4l3-2z" fill="#555" /></svg>
            </ScrollTrack>
          </TreeFrame>
          <Grip />
          <Sections>
            {['Dependencies', 'Details', 'Preview'].map((name) => (
              <SectionButton key={name}>
                {name}
                <svg width="5" height="5"><path d="m.5 1 2 3 2-3" fill="none" stroke="#333" /></svg>
              </SectionButton>
            ))}
          </Sections>
        </Navigator>
        <Viewport />
        <Scene />
        <Dimension>492.3984 mm</Dimension>
        <Note $left={192} $top={12}>I hace unticked action</Note>
        <Note $left={492} $top={6}>
          But the measure icon is still there and I can
          <br />
          not get rid of it?
        </Note>
      </Work>

      <Bar $height={14} $fill="linear-gradient(#e4e4e4, #d2d2d2)">
        <Toolbar>
          <Tools items="wrench v pageBlue grayBox assembly v move mate joints | parts partsTwo squares | camera | chain tee | clip v ." />
        </Toolbar>
        <Toolbar>
          <Tools items="sketch finish" />
          <Label>Finish Sketch</Label>
          <Tools items="profile lineRed arcRed circle corner chamfer rect spline plus ellipseGray v | trim trim cross | dims v | perp mirror auto v | gridTool clay clay2 ." />
        </Toolbar>
      </Bar>
      <StatusBar>
        <StatusText>Select objects and use MB3, or double-click an object</StatusText>
        <Icon name="finish" size={7} />
        <Icon name="windowFit" size={7} />
      </StatusBar>
      <TaskBar>
        <TaskIcon $width={15} aria-label="Start menu">
          <svg width="15" height="15" viewBox="0 0 15 15">
            <circle cx="7.5" cy="7.5" r="7" fill="#2f6f9f" stroke="#8fb6cc" strokeWidth=".8" />
            <path d="M3.5 5Q5.5 3.6 7 4.6V7.2Q5 6.4 3.5 7.4z" fill="#e8683a" />
            <path d="M7.8 4.8Q9.6 5.8 11.5 4.6V7Q9.8 8.2 7.8 7.2z" fill="#8cc152" />
            <path d="M3.5 8.2Q5 7.2 7 8V10.6Q5.2 9.8 3.5 10.8z" fill="#55a8e8" />
            <path d="M7.8 8.2Q9.6 9 11.5 7.8V10.2Q9.6 11.6 7.8 10.6z" fill="#f6cf4a" />
          </svg>
        </TaskIcon>
        <TaskIcon $width={33} aria-label="FileZilla">
          <FzBadge>Fz</FzBadge>
        </TaskIcon>
        <TaskButton>
          <svg width="10" height="12" viewBox="0 0 10 12" aria-hidden="true">
            <path d="M1 1h5l3 2v8H1z" fill="#e8c860" />
            <path d="M2 2h4v9H2z" fill="#f8eab0" />
          </svg>
          R:\NXmodels\Job...
        </TaskButton>
        <TaskIcon $width={26} aria-label="Chrome">
          <svg width="12" height="12" viewBox="0 0 12 12">
            <circle cx="6" cy="6" r="5.6" fill="#f4c828" />
            <path d="M1.2 3.2A5.6 5.6 0 0 1 11 3.4H6L4 7z" fill="#dd4433" />
            <path d="M1.2 3.2A5.6 5.6 0 0 0 6 11.6L8 7.5 4 7z" fill="#3aa552" />
            <circle cx="6" cy="6" r="2.6" fill="#fff" />
            <circle cx="6" cy="6" r="2" fill="#4285d8" />
          </svg>
        </TaskIcon>
        <TaskButton $active>
          <Icon name="nx" size={13} />
          NX 10 - Modeling...
        </TaskButton>
        <Tray>
          <svg width="4" height="3"><path d="M0 3h4L2 0z" fill="#fff" /></svg>
          <svg width="8" height="8"><path d="M1.5 1v7M2 1.5h4v3H2z" fill="#fff" stroke="#fff" /></svg>
          <svg width="8" height="8"><path d="M2 1.5h5v4H2zM1 7h4" fill="none" stroke="#ddd" /></svg>
          <svg width="7" height="8"><path d="M0 3h1l3-2v6L1 5H0z" fill="#eee" /><path d="M5.5 2v4" stroke="#ccc" /></svg>
          <Clock>
            11:53
            <br />
            03/06/2015
          </Clock>
          <ShowDesktop aria-label="Show desktop" />
        </Tray>
      </TaskBar>
    </Window>
  )
}

export default App
